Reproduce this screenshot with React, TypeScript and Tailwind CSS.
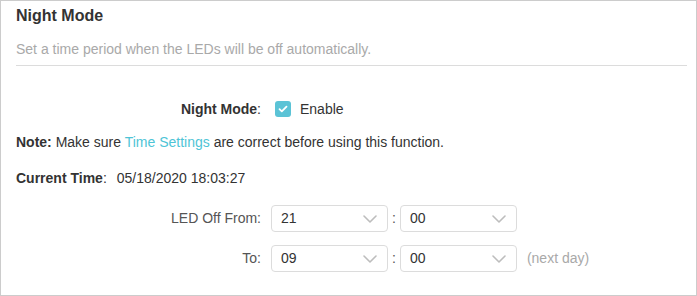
import React, { useState } from 'react';

function Chevron() {
  return (
    <svg width="14" height="8" viewBox="0 0 14 8" fill="none" className="shrink-0">
      <path d="M1 1l6 6 6-6" stroke="#bdbdbd" strokeWidth="1.6" strokeLinecap="round" strokeLinejoin="round" />
    </svg>
  );
}

function TimeSelect({ value }: { value: string }) {
  return (
    <div className="w-[117px] h-[27px] border border-[#dcdcdc] rounded-[4px] bg-white flex items-center justify-between pl-[9px] pr-[10px] text-[#333]">
      <span>{value}</span>
      <Chevron />
    </div>
  );
}

export default function App() {
  const [enabled, setEnabled] = useState(true);

  return (
    <div
      className="w-[697px] h-[296px] border border-[#cccccc] bg-white pl-[15px] pr-[9px] text-[14px] text-[#333]"
      style={{ fontFamily: '"Liberation Sans", Arial, sans-serif' }}
    >
      {/* Header */}
      <h2 className="pt-[6px] text-[16px] leading-[18px] font-bold text-[#333]">Night Mode</h2>
      <p className="mt-[15px] leading-[18px] text-[#a9a9a9]">Set a time period when the LEDs will be off automatically.</p>
      <div className="mt-[7px] h-px bg-[#dcdcdc]" />

      {/* Enable row */}
      <div className="mt-[33px] h-5 flex items-center">
        <div className="w-[245px] text-right">
          <span className="font-bold">Night Mode</span>:
        </div>
        <button
          onClick={() => setEnabled(!enabled)}
          className={`ml-[14px] w-4 h-4 rounded-[3px] flex items-center justify-center ${enabled ? 'bg-[#5bc3d6]' : 'border border-[#ccc] bg-white'}`}
        >
          {enabled && (
            <svg width="10" height="8" viewBox="0 0 10 8" fill="none">
              <path d="M1.5 4.2l2.3 2.2L8.5 1.6" stroke="white" strokeWidth="1.8" strokeLinecap="round" strokeLinejoin="round" />
            </svg>
          )}
        </button>
        <span className="ml-[9px]">Enable</span>
      </div>

      {/* Note */}
      <p className="mt-[14px] leading-[18px]">
        <span className="font-bold">Note:</span> Make sure <span className="text-[#4ec4d6]">Time Settings</span> are correct before using this function.
      </p>

      {/* Current time */}
      <p className="mt-[18px] leading-[18px]">
        <span className="font-bold">Current Time</span>:<span className="ml-[10px]">05/18/2020 18:03:27</span>
      </p>

      {/* LED off from */}
      <div className="mt-[18px] flex items-center">
        <div className="w-[245px] text-right text-[#555]">LED Off From:</div>
        <div className="ml-[10px] flex items-center">
          <TimeSelect value="21" />
          <span className="mx-[4px] text-[#555]">:</span>
          <TimeSelect value="00" />
        </div>
      </div>

      {/* To */}
      <div className="mt-[13px] flex items-center">
        <div className="w-[245px] text-right text-[#555]">To:</div>
        <div className="ml-[10px] flex items-center">
          <TimeSelect value="09" />
          <span className="mx-[4px] text-[#555]">:</span>
          <TimeSelect value="00" />
          <span className="ml-[10px] text-[#a9a9a9]">(next day)</span>
        </div>
      </div>
    </div>
  );
}
